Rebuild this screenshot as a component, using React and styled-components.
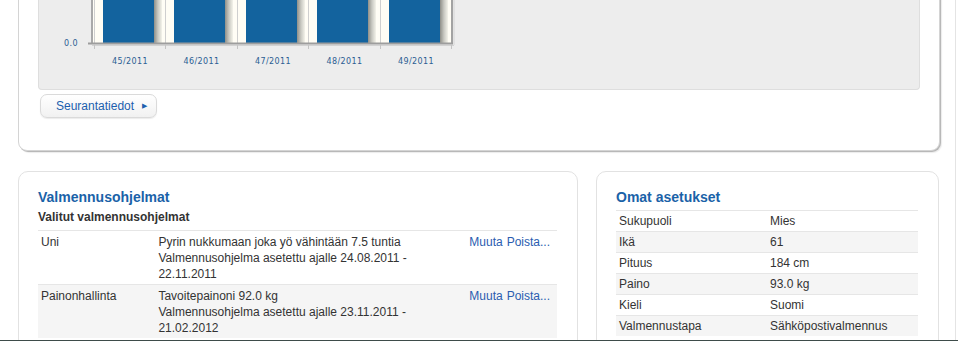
import React from 'react'
import styled, { createGlobalStyle } from 'styled-components'

const GlobalStyle = createGlobalStyle`
  html, body {
    margin: 0;
    padding: 0;
    background: #ffffff;
    overflow: hidden;
  }
  body {
    font-family: 'Liberation Sans', Arial, sans-serif;
    font-size: 12px;
    color: #333333;
  }
`

const Page = styled.div`
  box-sizing: border-box;
  width: 956px;
  margin-top: -120px;
  padding: 0 0 40px 18px;
  border-right: 1px solid #e4e4e4;
  display: flex;
  flex-direction: column;
  gap: 20px;
`

const TopPanel = styled.section`
  box-sizing: border-box;
  width: 922px;
  padding: 19px 19px 32px 19px;
  background: #ffffff;
  border: 1px solid #d4d4d4;
  border-radius: 9px;
  box-shadow: 1px 1px 0 #b8b8b8, 2px 2px 1px rgba(0, 0, 0, 0.08);
  display: flex;
  flex-direction: column;
  align-items: flex-start;
  gap: 4px;
`

const ChartArea = styled.div`
  align-self: stretch;
  background: #ededed;
  border: 1px solid #dedede;
  border-top: none;
  border-radius: 0 0 4px 4px;
  svg {
    display: block;
  }
`

const MoreButton = styled.button`
  margin-left: 2px;
  height: 24px;
  padding: 0 9px 0 15px;
  display: flex;
  align-items: center;
  gap: 8px;
  font-family: 'Liberation Sans', Arial, sans-serif;
  font-size: 12px;
  color: #1c5fae;
  background: linear-gradient(#ffffff, #f1f1f1);
  border: 1px solid #dadada;
  border-radius: 7px;
  box-shadow: 0 1px 1px rgba(0, 0, 0, 0.08);
  cursor: pointer;
  span.arrow {
    font-size: 7px;
    color: #1c5fae;
  }
`

const Row = styled.div`
  display: flex;
  gap: 18px;
  align-items: flex-start;
`

const Card = styled.section`
  box-sizing: border-box;
  width: ${p => p.$width}px;
  padding: 16px 20px 30px 19px;
  border: 1px solid #e2e2e2;
  border-radius: 10px;
  background: #ffffff;
`

const Title = styled.h2`
  margin: 0 0 ${p => p.$gap || 0}px 0;
  font-size: 14px;
  line-height: 18px;
  font-weight: bold;
  color: #1a62a8;
`

const SubTitle = styled.h3`
  margin: 4px 0 6px 0;
  font-size: 12px;
  line-height: 14px;
  font-weight: bold;
  color: #333333;
`

const Table = styled.table`
  width: 100%;
  border-collapse: collapse;
  font-size: 12px;
  color: #333333;
  tr {
    border-top: 1px solid #e6e6e6;
  }
  tr:nth-child(even) {
    background: #f5f5f5;
  }
  td {
    vertical-align: top;
    padding: ${p => (p.$compact ? '2px 3px 2px' : '3px 3px 2px')};
    line-height: 16px;
  }
`

const Actions = styled.td`
  white-space: nowrap;
  a {
    color: #2a5db0;
    text-decoration: none;
    margin-right: 4px;
  }
`

const BottomEdge = styled.div`
  position: fixed;
  left: 0;
  right: 0;
  bottom: 0;
  height: 1px;
  background: #3e4c4a;
`

const weeks = ['45/2011', '46/2011', '47/2011', '48/2011', '49/2011']
const grid = [55, 126, 198, 269, 341, 412]

const WeeklyChart = () => (
  <svg width="440" height="189" viewBox="0 0 440 189">
    <defs>
      <linearGradient id="barShade" x1="0" x2="1" y1="0" y2="0">
        <stop offset="0" stopColor="#8f8f88" />
        <stop offset="0.5" stopColor="#c9c9c2" />
        <stop offset="1" stopColor="#f4f3ea" />
      </linearGradient>
    </defs>
    <rect x="54" y="0" width="358" height="143" fill="#fffdf5" />
    {grid.slice(0, 5).map(x => (
      <line key={'g' + x} x1={x + 0.5} x2={x + 0.5} y1="0" y2="143" stroke="#cfcfcf" />
    ))}
    {grid.slice(0, 5).map((x, i) => (
      <g key={'b' + i}>
        <rect x={x + 9} y="0" width="51" height="143" fill="#13639e" />
        <rect x={x + 60} y="0" width="8" height="143" fill="url(#barShade)" />
      </g>
    ))}
    <line x1="53" x2="53" y1="0" y2="144" stroke="#a9a9a9" strokeWidth="2" />
    <line x1="413" x2="413" y1="0" y2="144" stroke="#a3a3a3" strokeWidth="2" />
    <line x1="415" x2="415" y1="0" y2="145" stroke="#d6d6d6" />
    <line x1="49" x2="414" y1="143.5" y2="143.5" stroke="#9d9d9d" strokeWidth="2" />
    <line x1="53" x2="415" y1="145.5" y2="145.5" stroke="#d2d2d2" />
    {grid.map(x => (
      <line key={'t' + x} x1={x + 0.5} x2={x + 0.5} y1="144" y2="149" stroke="#c4c4c4" />
    ))}
    <text x="39" y="146" textAnchor="end" fontSize="8" letterSpacing="0.4" fill="#2b5d93" fontFamily="'DejaVu Sans', Verdana, sans-serif">
      0.0
    </text>
    {weeks.map((w, i) => (
      <text
        key={w}
        x={(grid[i] + grid[i + 1]) / 2 + 0.5}
        y="164"
        textAnchor="middle"
        fontSize="8"
        letterSpacing="0.4"
        fill="#2b5d93"
        fontFamily="'DejaVu Sans', Verdana, sans-serif"
      >
        {w}
      </text>
    ))}
  </svg>
)

const programs = [
  {
    name: 'Uni',
    goal: 'Pyrin nukkumaan joka yö vähintään 7.5 tuntia',
    period: 'Valmennusohjelma asetettu ajalle 24.08.2011 - 22.11.2011',
  },
  {
    name: 'Painonhallinta',
    goal: 'Tavoitepainoni 92.0 kg',
    period: 'Valmennusohjelma asetettu ajalle 23.11.2011 - 21.02.2012',
  },
]

const settings = [
  ['Sukupuoli', 'Mies'],
  ['Ikä', '61'],
  ['Pituus', '184 cm'],
  ['Paino', '93.0 kg'],
  ['Kieli', 'Suomi'],
  ['Valmennustapa', 'Sähköpostivalmennus'],
]

const App = () => {
  return (
    <>
      <GlobalStyle />
      <Page>
        <TopPanel>
          <ChartArea>
            <WeeklyChart />
          </ChartArea>
          <MoreButton>
            <span>Seurantatiedot</span>
            <span className="arrow">▶</span>
          </MoreButton>
        </TopPanel>

        <Row>
          <Card $width={560}>
            <Title>Valmennusohjelmat</Title>
            <SubTitle>Valitut valmennusohjelmat</SubTitle>
            <Table>
              <colgroup>
                <col style={{ width: 118 }} />
                <col style={{ width: 314 }} />
                <col />
              </colgroup>
              <tbody>
                {programs.map(p => (
                  <tr key={p.name}>
                    <td>{p.name}</td>
                    <td>
                      {p.goal}
                      <br />
                      {p.period}
                    </td>
                    <Actions>
                      <a href="#">Muuta</a>
                      <a href="#">Poista...</a>
                    </Actions>
                  </tr>
                ))}
              </tbody>
            </Table>
          </Card>

          <Card $width={343}>
            <Title $gap={4}>Omat asetukset</Title>
            <Table $compact>
              <colgroup>
                <col style={{ width: '50%' }} />
                <col />
              </colgroup>
              <tbody>
                {settings.map(([k, v]) => (
                  <tr key={k}>
                    <td>{k}</td>
                    <td>{v}</td>
                  </tr>
                ))}
              </tbody>
            </Table>
          </Card>
        </Row>
      </Page>
      <BottomEdge />
    </>
  )
}

export default App
